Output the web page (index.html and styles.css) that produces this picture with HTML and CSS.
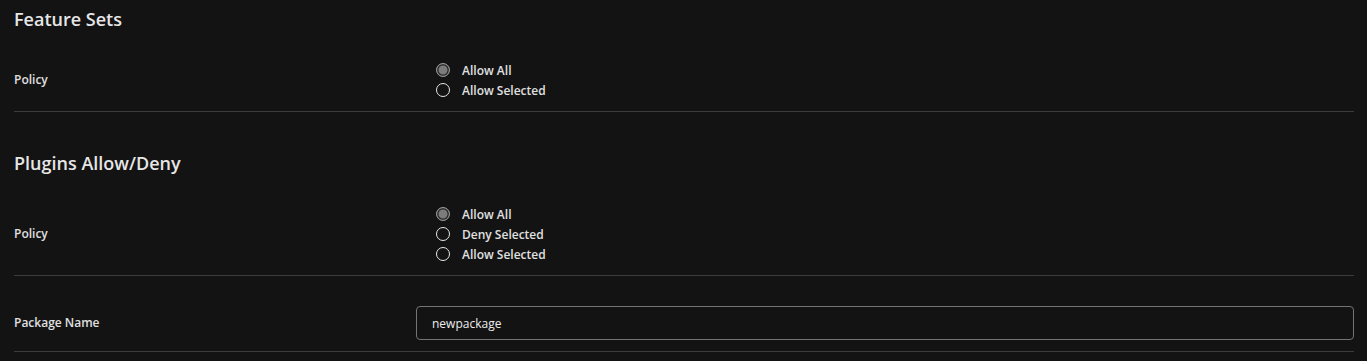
FILE: index.html
```html
<!DOCTYPE html>
<html>
<head>
<meta charset="utf-8">
<link rel="stylesheet" href="styles.css">
</head>
<body>
<div class="page">
  <section class="section">
    <h2 class="heading">Feature Sets</h2>
    <div class="row">
      <div class="label">Policy</div>
      <div class="control">
        <div class="radios">
          <label class="radio"><span class="dot checked"></span><span>Allow All</span></label>
          <label class="radio"><span class="dot"></span><span>Allow Selected</span></label>
        </div>
      </div>
    </div>
  </section>
  <section class="section second">
    <h2 class="heading">Plugins Allow/Deny</h2>
    <div class="row">
      <div class="label">Policy</div>
      <div class="control">
        <div class="radios">
          <label class="radio"><span class="dot checked"></span><span>Allow All</span></label>
          <label class="radio"><span class="dot"></span><span>Deny Selected</span></label>
          <label class="radio"><span class="dot"></span><span>Allow Selected</span></label>
        </div>
      </div>
    </div>
    <div class="row input-row">
      <div class="label">Package Name</div>
      <div class="control">
        <div class="input">newpackage</div>
      </div>
    </div>
  </section>
</div>
</body>
</html>
```

FILE: styles.css
```css
html, body {
  margin: 0;
  padding: 0;
  background: #131313;
  height: 100%;
}
body {
  font-family: "Open Sans", "Liberation Sans", sans-serif;
  color: #e2e2e2;
}
.page {
  padding: 0 13px 0 14px;
}
.heading {
  margin: 7px 0 0 0;
  font-size: 18px;
  line-height: 24px;
  font-weight: 600;
  color: #e6e6e6;
}
.second .heading {
  margin-top: 39px;
}
.row {
  display: flex;
  align-items: center;
  border-bottom: 1px solid #3c3c3c;
  padding: 10px 0 11px 0;
  margin-top: 19px;
}
.input-row {
  margin-top: 0;
  padding: 30px 0 11px 0;
}
.label {
  width: 402px;
  flex: none;
  font-size: 12px;
  font-weight: 600;
  line-height: 16px;
  color: #e0e0e0;
}
.control {
  flex: 1;
}
.radios {
  display: flex;
  flex-direction: column;
  padding-left: 20px;
}
.radio {
  display: flex;
  align-items: center;
  height: 20px;
  font-size: 12px;
  font-weight: 600;
  color: #e0e0e0;
}
.dot {
  width: 14px;
  height: 14px;
  box-sizing: border-box;
  border: 1.5px solid #e8e8e8;
  border-radius: 50%;
  margin-right: 12px;
  background: #131313;
}
.dot.checked {
  border-color: #9a9a9a;
  background: #7c7c7c;
  box-shadow: inset 0 0 0 1.5px #2a2a2a;
}
.input {
  height: 34px;
  box-sizing: border-box;
  border: 1px solid #747474;
  border-radius: 4px;
  padding: 0 15px;
  display: flex;
  align-items: center;
  font-size: 12px;
  color: #ececec;
  background: #131313;
}
```
